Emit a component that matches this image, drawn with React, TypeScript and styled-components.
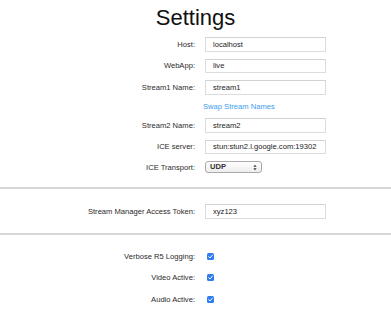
import styled, { createGlobalStyle } from "styled-components";

const GlobalStyle = createGlobalStyle`
  html, body {
    margin: 0;
    background: #ffffff;
    font-family: "Liberation Sans", Arial, Helvetica, sans-serif;
    color: #222;
  }
`;

const textFields = [
  { label: "Host:", value: "localhost" },
  { label: "WebApp:", value: "live" },
  { label: "Stream1 Name:", value: "stream1" },
];

const streamFields = [
  { label: "Stream2 Name:", value: "stream2" },
  { label: "ICE server:", value: "stun:stun2.l.google.com:19302" },
];

const toggles = ["Verbose R5 Logging:", "Video Active:", "Audio Active:"];

export default function App() {
  return (
    <Page>
      <GlobalStyle />
      <Title>Settings</Title>

      <Section $top={6}>
        {textFields.map((f) => (
          <Row key={f.label}>
            <Label>{f.label}</Label>
            <Input defaultValue={f.value} />
          </Row>
        ))}
        <Row $h={9}>
          <span />
          <SwapLink href="#">Swap Stream Names</SwapLink>
        </Row>
        {streamFields.map((f) => (
          <Row key={f.label}>
            <Label>{f.label}</Label>
            <Input defaultValue={f.value} />
          </Row>
        ))}
        <Row $h={12}>
          <Label>ICE Transport:</Label>
          <SelectWrap>
            <Select defaultValue="UDP">
              <option>UDP</option>
              <option>TCP</option>
            </Select>
            <SelectArrows viewBox="0 0 6 10">
              <path d="M3 1 L5.5 4 H0.5 Z" />
              <path d="M3 9 L5.5 6 H0.5 Z" />
            </SelectArrows>
          </SelectWrap>
        </Row>
      </Section>

      <Divider $top={14} />

      <Section $top={15}>
        <Row>
          <Label>Stream Manager Access Token:</Label>
          <Input defaultValue="xyz123" />
        </Row>
      </Section>

      <Divider $top={14.5} />

      <Section $top={14.5}>
        {toggles.map((t) => (
          <Row key={t}>
            <Label>{t}</Label>
            <Check>
              <svg viewBox="0 0 10 10">
                <path d="M2.4 5.3 L4.3 7.1 L7.8 3" />
              </svg>
            </Check>
          </Row>
        ))}
      </Section>
    </Page>
  );
}

const Page = styled.div`
  width: 391px;
  height: 329px;
  overflow: hidden;
  padding-top: 5px;
  box-sizing: border-box;
`;

const Title = styled.h1`
  margin: 0;
  font-size: 22px;
  line-height: 26px;
  font-weight: 400;
  text-align: center;
  color: #111;
`;

const Section = styled.div<{ $top: number }>`
  display: flex;
  flex-direction: column;
  gap: 7.5px;
  padding-top: ${({ $top }) => $top}px;
`;

const Row = styled.div<{ $h?: number }>`
  display: grid;
  grid-template-columns: 195px 1fr;
  column-gap: 10px;
  align-items: center;
  height: ${({ $h }) => $h ?? 14}px;
  font-size: 7.6px;
  line-height: 9px;
`;

const Label = styled.label`
  justify-self: end;
  font-size: 7.6px;
  color: #2a2a2a;
  white-space: nowrap;
`;

const Input = styled.input`
  box-sizing: border-box;
  width: 121px;
  height: 14.5px;
  margin: 0;
  padding: 0 0 0 7px;
  border: 1px solid #dcdcdc;
  border-top-color: #d2d2d2;
  border-radius: 0;
  font-family: inherit;
  font-size: 7.6px;
  color: #222;
  outline: none;
`;

const SwapLink = styled.a`
  margin-left: -2px;
  font-size: 7.6px;
  color: #3c9cf2;
  text-decoration: none;
  white-space: nowrap;
`;

const SelectWrap = styled.span`
  position: relative;
  display: block;
  width: 57px;
  height: 12px;
`;

const Select = styled.select`
  appearance: none;
  -webkit-appearance: none;
  display: block;
  box-sizing: border-box;
  width: 57px;
  height: 12px;
  margin: 0;
  padding: 0 0 0 4px;
  border: 1px solid #a9a9a9;
  border-radius: 3px;
  background: linear-gradient(#ffffff, #ededed);
  font-family: inherit;
  font-size: 7.6px;
  font-weight: 700;
  color: #333;
  line-height: 10px;
  outline: none;
`;

const SelectArrows = styled.svg`
  position: absolute;
  right: 5px;
  top: 2.5px;
  width: 4px;
  height: 7px;
  fill: #333;
  pointer-events: none;
`;

const Check = styled.span`
  display: inline-flex;
  align-items: center;
  justify-content: center;
  margin-left: 2px;
  width: 7px;
  height: 7px;
  border-radius: 1.5px;
  background: #2f7cf1;
  > svg {
    width: 7px;
    height: 7px;
    fill: none;
    stroke: #ffffff;
    stroke-width: 1.4;
    stroke-linecap: round;
    stroke-linejoin: round;
  }
`;

const Divider = styled.div<{ $top: number }>`
  margin-top: ${({ $top }) => $top}px;
  height: 2px;
  background: #d6d6d6;
`;
